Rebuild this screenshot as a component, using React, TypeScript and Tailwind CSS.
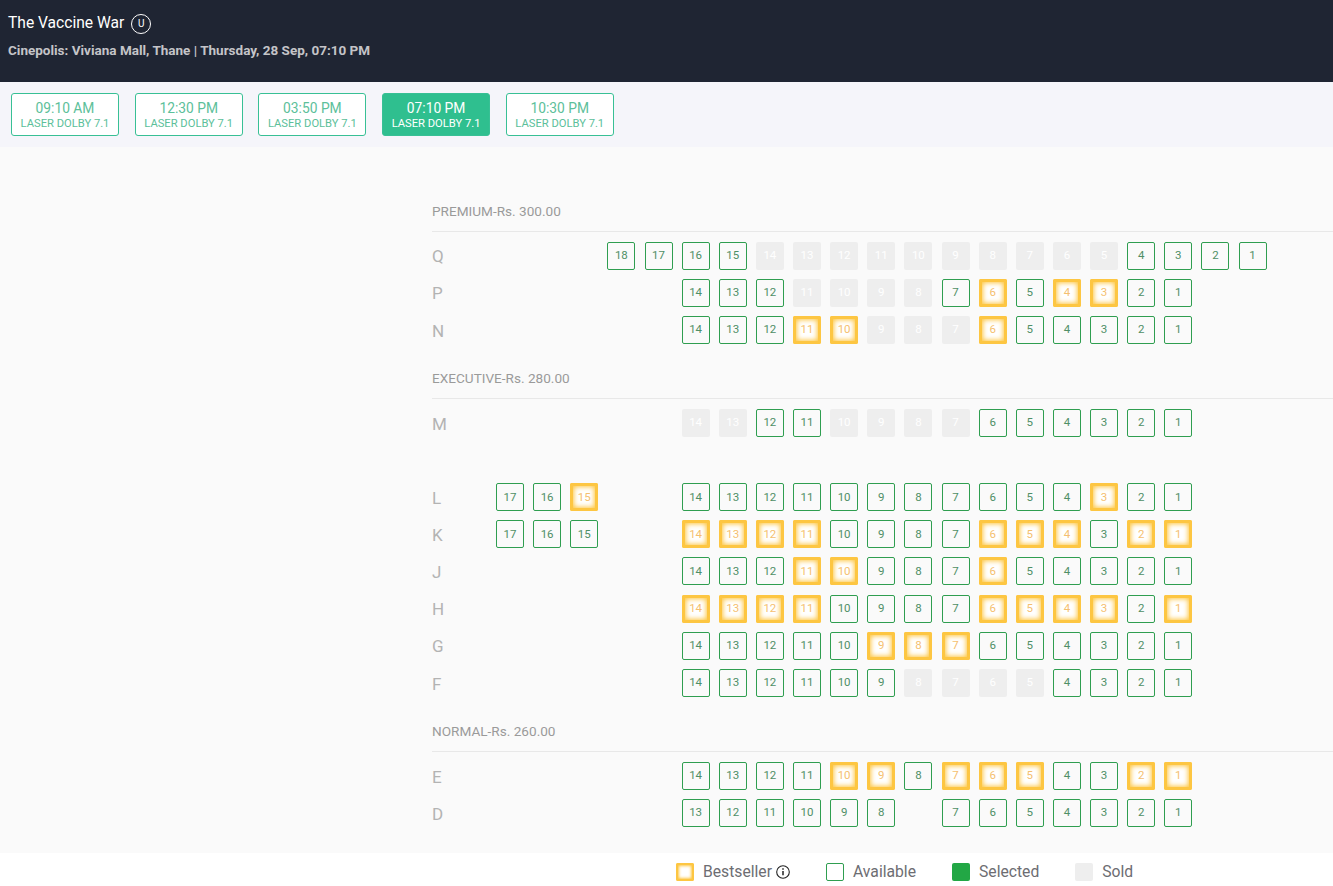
const SHOWTIMES = ["09:10 AM", "12:30 PM", "03:50 PM", "07:10 PM", "10:30 PM"];
const ACTIVE_TIME = "07:10 PM";

// a = available, b = bestseller, s = sold, . = empty slot
type Row = { label: string; seats: string };
type Section = { title: string; rows: Row[] };

const SECTIONS: Section[] = [
  {
    title: "PREMIUM-Rs. 300.00",
    rows: [
      { label: "Q", seats: "...aaaassssssssssaaaa" },
      { label: "P", seats: ".....aaassssababbaa" },
      { label: "N", seats: ".....aaabbsssbaaaaa" },
    ],
  },
  {
    title: "EXECUTIVE-Rs. 280.00",
    rows: [
      { label: "M", seats: ".....ssaassssaaaaaa" },
      { label: "", seats: "" },
      { label: "L", seats: "aab..aaaaaaaaaaabaa" },
      { label: "K", seats: "aaa..bbbbaaaabbbabb" },
      { label: "J", seats: ".....aaabbaaabaaaaa" },
      { label: "H", seats: ".....bbbbaaaabbbbab" },
      { label: "G", seats: ".....aaaaabbbaaaaaa" },
      { label: "F", seats: ".....aaaaaassssaaaa" },
    ],
  },
  {
    title: "NORMAL-Rs. 260.00",
    rows: [
      { label: "E", seats: ".....aaaabbabbbaabb" },
      { label: "D", seats: ".....aaaaaa.aaaaaaa" },
    ],
  },
];

const SEAT_STYLES: Record<string, string> = {
  a: "border border-[#2f9e50] text-[#4f8f66]",
  b: "bg-white text-[#f5bf70] shadow-[inset_0_0_0_3px_#fdc642,inset_0_0_5px_4px_#fdc642]",
  s: "bg-[#eeeeee] text-white",
};

function SeatRow({ row }: { row: Row }) {
  let number = row.seats.replace(/\./g, "").length;
  return (
    <div className="flex h-[37.14px] items-center">
      <div className="w-[64px] pt-[3px] text-[17px] text-[#b3b3b3]">{row.label}</div>
      {row.seats.split("").map((status, index) => (
        <div key={index} className="w-[37.14px] shrink-0">
          {status !== "." && (
            <div
              className={`flex h-[28px] w-[28px] items-center justify-center rounded-[2px] text-[11.5px] ${SEAT_STYLES[status]}`}
            >
              {number--}
            </div>
          )}
        </div>
      ))}
    </div>
  );
}

function LegendBox({ className }: { className: string }) {
  return <span className={`mr-[9px] h-[18px] w-[18px] rounded-[2px] ${className}`} />;
}

export default function App() {
  return (
    <div className="flex h-[886px] flex-col overflow-hidden bg-[#fafafa] font-['Roboto',sans-serif]">
      <header className="h-[82px] shrink-0 bg-[#1f2533] px-2 pt-[13px]">
        <div className="flex h-[21px] items-center text-[15.6px] text-white">
          The Vaccine War
          <span className="ml-[7px] flex h-[20px] w-[20px] items-center justify-center rounded-full border-[1.5px] border-white text-[10px]">
            U
          </span>
        </div>
        <div className="mt-[6px] text-[13.5px] font-bold text-[#c4c4c8]">
          Cinepolis: Viviana Mall, Thane | Thursday, 28 Sep, 07:10 PM
        </div>
      </header>

      <div className="flex h-[65px] shrink-0 items-center gap-[15.7px] bg-[#f5f5fa] pl-[11px]">
        {SHOWTIMES.map((time) => (
          <div
            key={time}
            className={`flex h-[43px] w-[108px] flex-col items-center justify-center rounded-[3px] border border-[#38c095] ${
              time === ACTIVE_TIME ? "bg-[#2fbf8f] text-white" : "bg-white text-[#5cc09a]"
            }`}
          >
            <span className="text-[13.8px] leading-[17px]">{time}</span>
            <span className="text-[11.2px] leading-[13px]">LASER DOLBY 7.1</span>
          </div>
        ))}
      </div>

      <main className="flex-1 pl-[432px] pt-[44px]">
        {SECTIONS.map((section, index) => (
          <section key={section.title} className={index > 0 ? "mt-[10px]" : ""}>
            <h2 className="mb-[5px] flex h-[41px] items-center border-b border-[#e8e8e8] text-[13.6px] font-normal text-[#9a9a9a]">
              {section.title}
            </h2>
            {section.rows.map((row, rowIndex) => (
              <SeatRow key={rowIndex} row={row} />
            ))}
          </section>
        ))}
      </main>

      <footer className="flex h-[33px] shrink-0 items-center bg-white pl-[676px] pt-[5px] text-[15.7px] text-[#6d6d72]">
        <LegendBox className="bg-white shadow-[inset_0_0_0_2px_#fdc642,inset_0_0_3px_3px_#fdc642]" />
        Bestseller
        <svg viewBox="0 0 14 14" className="ml-[4px] h-[14px] w-[14px] text-[#222]" fill="none" stroke="currentColor">
          <circle cx="7" cy="7" r="6.3" strokeWidth="1.1" />
          <path d="M7 6v4.2" strokeWidth="1.5" />
          <path d="M7 3.2v1.5" strokeWidth="1.5" />
        </svg>
        <span className="w-[36px]" />
        <LegendBox className="border border-[#2f9e50]" />
        Available
        <span className="w-[36px]" />
        <LegendBox className="bg-[#22a745]" />
        Selected
        <span className="w-[36px]" />
        <LegendBox className="bg-[#eeeeee]" />
        Sold
      </footer>
    </div>
  );
}
